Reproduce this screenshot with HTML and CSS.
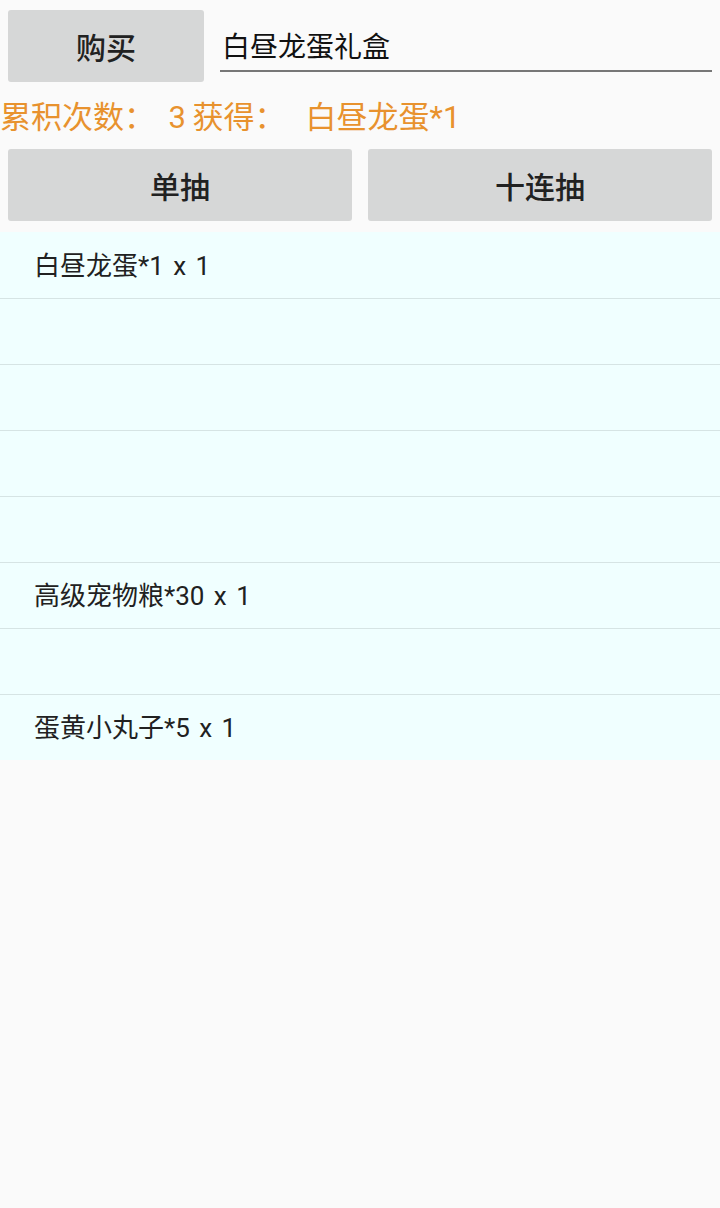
FILE: index.html
```html
<!DOCTYPE html>
<html lang="zh-CN">
<head>
    <meta charset="UTF-8">
    <meta name="viewport" content="width=device-width, initial-scale=1.0">
    <title>抽奖</title>
    <link rel="stylesheet" href="styles.css">
</head>
<body>
    <div class="top-row">
        <button type="button" class="btn buy-btn">购买</button>
        <div class="box-field">白昼龙蛋礼盒</div>
    </div>

    <div class="stats">累积次数：  3 获得：   白昼龙蛋*1</div>

    <div class="draw-row">
        <button type="button" class="btn">单抽</button>
        <button type="button" class="btn">十连抽</button>
    </div>

    <ul class="result-list">
        <li>白昼龙蛋*1 x 1</li>
        <li></li>
        <li></li>
        <li></li>
        <li></li>
        <li>高级宠物粮*30 x 1</li>
        <li></li>
        <li>蛋黄小丸子*5 x 1</li>
    </ul>
</body>
</html>
```

FILE: styles.css
```css
body {
    margin: 0;
    padding: 0;
    background-color: #fafafa;
    font-family: Roboto, "Noto Sans CJK SC", sans-serif;
    color: #212121;
    height: 1208px;
    overflow: hidden;
}
.top-row {
    display: flex;
    gap: 16px;
    padding: 10px 8px 0 8px;
}
.btn {
    height: 72px;
    border: none;
    border-radius: 3px;
    background: #d6d7d7;
    color: #212121;
    font-family: Roboto, "Noto Sans CJK SC", sans-serif;
    font-size: 30px;
    font-weight: 500;
    padding: 0;
    cursor: pointer;
}
.buy-btn {
    width: 196px;
    flex: none;
}
.box-field {
    flex: 1;
    height: 62px;
    box-sizing: border-box;
    border-bottom: 2px solid #777;
    padding: 18px 0 0 2px;
    font-size: 28px;
    line-height: 40px;
    color: #111;
}
.stats {
    color: #e8922e;
    font-size: 31px;
    line-height: 40px;
    padding-top: 16px;
    white-space: pre;
    word-spacing: -1px;
}
.draw-row {
    display: flex;
    gap: 16px;
    padding: 11px 8px 0 8px;
}
.draw-row .btn {
    flex: 1;
}
.result-list {
    list-style: none;
    margin: 11px 0 0 0;
    padding: 0;
    background: #f0ffff;
}
.result-list li {
    height: 66px;
    box-sizing: border-box;
    padding: 2px 0 0 34px;
    line-height: 63px;
    font-size: 26px;
    word-spacing: 3px;
    border-top: 1px solid #d6e4e4;
}
.result-list li:first-child {
    line-height: 64px;
    border-top: none;
}
```
